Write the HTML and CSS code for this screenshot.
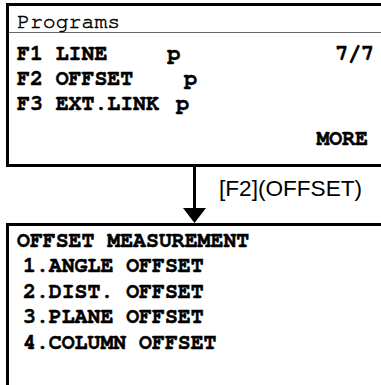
FILE: index.html
```html
<!DOCTYPE html>
<html lang="en">
<head>
    <meta charset="UTF-8">
    <meta name="viewport" content="width=device-width, initial-scale=1.0">
    <title>Programs - Offset</title>
    <link rel="stylesheet" href="styles.css">
</head>
<body>

<div class="panel panel-top">
    <div class="title">Programs</div>
    <div class="row">
        <span class="label">F1 LINE</span><span class="mark mark-1">p</span>
        <span class="page">7/7</span>
    </div>
    <div class="row">
        <span class="label">F2 OFFSET</span><span class="mark mark-2">p</span>
    </div>
    <div class="row">
        <span class="label">F3 EXT.LINK</span><span class="mark mark-3">p</span>
    </div>
    <div class="row row-more">
        <span class="more">MORE</span>
    </div>
</div>

<div class="step">
    <svg class="arrow" width="26" height="56" viewBox="0 0 26 56">
        <rect x="11" y="0" width="3" height="42" fill="#000"/>
        <polygon points="1,41 24,41 12.5,56" fill="#000"/>
    </svg>
    <span class="step-label">[F2](OFFSET)</span>
</div>

<div class="panel panel-bottom">
    <div class="heading">OFFSET MEASUREMENT</div>
    <div class="item">1.ANGLE OFFSET</div>
    <div class="item">2.DIST. OFFSET</div>
    <div class="item">3.PLANE OFFSET</div>
    <div class="item">4.COLUMN OFFSET</div>
</div>

</body>
</html>
```

FILE: styles.css
```css
html, body {
    overflow: hidden;
}
body {
    margin: 0;
    padding: 3px 0 0 6px;
    background: #fff;
    color: #000;
    font-family: "Nimbus Mono PS", "Nimbus Mono L", FreeMono, "Courier New", Courier, "Liberation Mono", monospace;
    font-weight: bold;
    font-size: 21.5px;
    -webkit-text-stroke: 0.5px #000;
}
.panel {
    width: 380px;
    border: 3px solid #000;
    border-right: none;
}
.panel-top {
    height: 158px;
}
.title {
    padding: 4px 0 0 8px;
    line-height: 24px;
    height: 22px;
    font-weight: normal;
    -webkit-text-stroke: 0.5px #000;
    border-bottom: 1px solid #666;
}
.row {
    display: flex;
    padding: 0 15px 0 8px;
    line-height: 25px;
}
.row:nth-child(2) {
    margin-top: 8px;
}
.mark-1 {
    margin-left: 60px;
}
.mark-2 {
    margin-left: 51px;
}
.mark-3 {
    margin-left: 17px;
}
.page {
    margin-left: auto;
}
.row-more {
    margin-top: 10px;
    justify-content: flex-end;
    padding-right: 21px;
}
.step {
    display: flex;
    align-items: flex-start;
    height: 56px;
}
.arrow {
    display: block;
    margin-left: 176px;
}
.step-label {
    margin: 9px 0 0 11px;
    font-family: "Liberation Sans", Arial, sans-serif;
    font-weight: normal;
    font-size: 22.6px;
    line-height: 26px;
    -webkit-text-stroke: 0;
}
.panel-bottom {
    height: 200px;
    padding-top: 2px;
}
.heading {
    padding-left: 8px;
    line-height: 25px;
}
.item {
    padding-left: 14px;
    line-height: 25.6px;
}
```
